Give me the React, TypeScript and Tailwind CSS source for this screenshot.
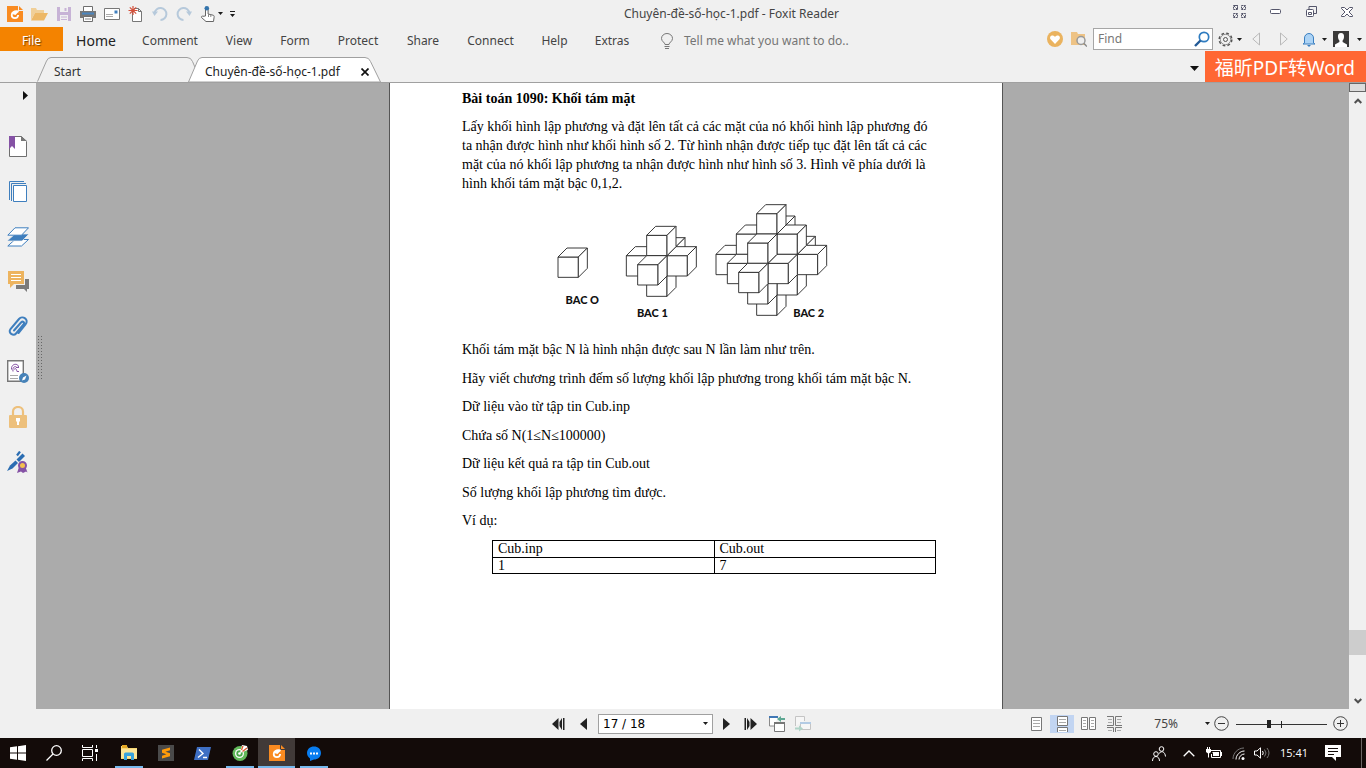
import type { ReactNode } from "react";

type IconProps = { w?: number; h?: number; box?: string; className?: string; children: ReactNode };

function Icon({ w = 16, h = 16, box, className = "", children }: IconProps) {
  return (
    <svg width={w} height={h} viewBox={box ?? `0 0 ${w} ${h}`} fill="none" className={`shrink-0 ${className}`} aria-hidden="true">
      {children}
    </svg>
  );
}

function IconButton({ label, className, children }: { label: string; className: string; children: ReactNode }) {
  return (
    <button type="button" aria-label={label} className={`flex shrink-0 items-center justify-center ${className}`}>
      {children}
    </button>
  );
}

function Caret({ className = "" }: { className?: string }) {
  return (
    <Icon w={5} h={3} className={className}>
      <path d="M0 0h5L2.500 3z" fill="#1c1c1c" />
    </Icon>
  );
}

function FoxitLogo() {
  return (
    <Icon>
      <path d="M0 0h11v5h5v11H0z" fill="#f98b21" />
      <path d="M12 0l4 4h-4z" fill="#f98b21" />
      <path d="M11.500 5.500C7 4.500 4.700 6.500 4.700 9c0 2 1.400 3.200 3.300 3.200 1.900 0 3-1.200 3.200-3.200" stroke="#fff" strokeWidth="1.800" />
      <path d="M5 8c1-3 4-3 7-2.800L8.500 9z" fill="#fff" />
    </Icon>
  );
}

const quickTools: { label: string; width: string; icon: ReactNode }[] = [
  { label: "Foxit Reader", width: "w-[25px]", icon: <FoxitLogo /> },
  {
    label: "Open",
    width: "w-[25px]",
    icon: (
      <Icon w={17} h={14}>
        <path d="M0 13V1h5l1 2h7v3H4z" fill="#f0cf98" />
        <path d="M4 6h13l-4 7.500H0z" fill="#edb867" />
      </Icon>
    ),
  },
  {
    label: "Save",
    width: "w-6",
    icon: (
      <Icon w={14} h={14}>
        <path d="M0 0h14v14H0z" fill="#c7b3d6" />
        <path d="M3 0h8v5H3zM3 8h8v6H3z" fill="#f0f0f0" />
        <path d="M7.500 1h2v3h-2zM4 9.500h6v1H4zM4 12h6v1H4z" fill="#c7b3d6" />
      </Icon>
    ),
  },
  {
    label: "Print",
    width: "w-6",
    icon: (
      <Icon>
        <path d="M3.500 5V.5h9V5" fill="#fff" stroke="#6e6e6e" />
        <path d="M0 5h16v7H0z" fill="#777" />
        <path d="M2 6.500h12v2H2z" fill="#4a86c0" />
        <path d="M3.500 10.500h9v5h-9z" fill="#fff" stroke="#6e6e6e" />
        <path d="M5 13h6" stroke="#888" />
      </Icon>
    ),
  },
  {
    label: "Email",
    width: "w-6",
    icon: (
      <Icon w={16} h={12}>
        <path d="M.5.5h15v11H.5z" fill="#fff" stroke="#777" />
        <path d="M10.500 2.500h3v3h-3z" fill="#3f7fbe" />
        <path d="M2 6.500h7M2 8.500h7" stroke="#aaa" />
      </Icon>
    ),
  },
  {
    label: "New document",
    width: "w-6",
    icon: (
      <Icon>
        <path d="M4.500 5.500V15.500h9v-10l-3-3H6" fill="#fff" stroke="#777" />
        <path d="M10.500 2.500v3h3" stroke="#777" />
        <path d="M5 0v9M.5 4.500h9M1.800 1.300l6.400 6.400M8.200 1.300L1.800 7.700" stroke="#d4503a" strokeWidth="1.200" />
      </Icon>
    ),
  },
  {
    label: "Undo",
    width: "w-6",
    icon: (
      <Icon>
        <path d="M2.500 7a6 6 0 1 1 6 7" stroke="#b6c9db" strokeWidth="2" />
        <path d="M0 5.500h6L2.500 10z" fill="#b6c9db" />
      </Icon>
    ),
  },
  {
    label: "Redo",
    width: "w-6",
    icon: (
      <Icon>
        <path d="M13.500 7a6 6 0 1 0-6 7" stroke="#b6c9db" strokeWidth="2" />
        <path d="M16 5.500h-6l3.500 4.500z" fill="#b6c9db" />
      </Icon>
    ),
  },
  {
    label: "Touch mode",
    width: "w-6",
    icon: (
      <Icon>
        <path d="M5.500 10V3.500a1.300 1.300 0 0 1 2.600 0V8l5 1.200c1 .3 1.200 1 1 2l-.6 4.300H6L1.500 11.500c-.5-1 .6-1.800 1.500-1.200z" fill="#fff" stroke="#666" />
        <path d="M8.500 8v3M10.800 8.500v2.500" stroke="#888" />
        <circle cx="6.800" cy="2.300" r="2.300" fill="#3474ac" />
      </Icon>
    ),
  },
];

function TitleBar() {
  return (
    <header className="flex h-[27px] shrink-0 items-center">
      <div className="flex items-center pl-0.5">
        {quickTools.map((t) => (
          <IconButton key={t.label} label={t.label} className={`h-6 ${t.width}`}>
            {t.icon}
          </IconButton>
        ))}
        <Caret className="-ml-0.5" />
        <IconButton label="Customize toolbar" className="h-6 w-[19px]">
          <Icon w={5} h={6}>
            <path d="M0 0h5v1H0zM0 3h5L2.500 6z" fill="#1c1c1c" />
          </Icon>
        </IconButton>
      </div>
      <h1 className="flex-1 truncate text-center text-xs text-[#444]">Chuyên-đề-số-học-1.pdf - Foxit Reader</h1>
      <div className="flex h-6 items-center pr-px pb-1">
        <IconButton label="Ribbon display" className="w-9">
          <Icon w={13} h={13}>
            <path d="M1 .5h3.500v3.500M4.500.5H.5v4h4zM8.500.5h4v4h-4zM.5 8.500h4v4h-4zM8.500 8.500h4v4h-4zM1 1l3 3M12 1L9 4M1 12l3-3M12 12L9 9" stroke="#55566b" strokeDasharray="2 .6" />
          </Icon>
        </IconButton>
        <IconButton label="Minimize" className="w-9">
          <Icon w={11} h={5}>
            <rect x=".5" y=".5" width="10" height="4" rx="1" fill="#fff" stroke="#55566b" />
          </Icon>
        </IconButton>
        <IconButton label="Restore" className="w-9">
          <Icon w={11} h={11}>
            <path d="M3 3V.5h7.500v7H8" stroke="#55566b" />
            <rect x=".5" y="3.500" width="7" height="7" rx="1" fill="#fff" stroke="#55566b" />
            <path d="M2.500 6.500h3v2h-3z" stroke="#55566b" />
          </Icon>
        </IconButton>
        <IconButton label="Close" className="w-9">
          <Icon w={12} h={10}>
            <path d="M.5.5h3L6 3 8.500.5h3v1L8 5l3.500 3.500v1h-3L6 7 3.500 9.500h-3v-1L4 5 .5 1.500z" fill="#fff" stroke="#55566b" />
          </Icon>
        </IconButton>
      </div>
    </header>
  );
}

const menus = [
  { label: "Home", style: "w-[66px] text-sm text-[#222]" },
  { label: "Comment", style: "w-[82px] text-xs text-[#444]" },
  { label: "View", style: "w-[56px] text-xs text-[#444]" },
  { label: "Form", style: "w-[56px] text-xs text-[#444]" },
  { label: "Protect", style: "w-[70px] text-xs text-[#444]" },
  { label: "Share", style: "w-[60px] text-xs text-[#444]" },
  { label: "Connect", style: "w-[75px] text-xs text-[#444]" },
  { label: "Help", style: "w-[53px] text-xs text-[#444]" },
  { label: "Extras", style: "w-[62px] text-xs text-[#444]" },
];

function MenuBar() {
  return (
    <div className="flex h-6 shrink-0 items-center">
      <nav className="flex h-full items-center" aria-label="Ribbon">
        <button type="button" className="h-full w-[63px] bg-[#f48300] pt-1 text-xs text-white [text-shadow:1px_1px_1px_#7a4200]">
          File
        </button>
        {menus.map((m) => (
          <button key={m.label} type="button" className={`h-full whitespace-nowrap pt-1 text-center ${m.style}`}>
            {m.label}
          </button>
        ))}
      </nav>
      <button type="button" className="ml-[18px] flex items-center gap-[11px] whitespace-nowrap pt-1 text-xs text-[#757575]">
        <Icon w={12} h={16}>
          <path d="M4 11.500C4 9.500.5 8.500.5 5.500a5.500 5 0 0 1 11 0c0 3-3.500 4-3.500 6zM3.500 13.500h5M4 15.500h4" stroke="#777" />
        </Icon>
        Tell me what you want to do..
      </button>
      <div className="ml-auto flex items-center">
        <IconButton label="Favourites" className="mr-2">
          <Icon>
            <circle cx="8" cy="8" r="8" fill="#eab35f" />
            <path d="M8 13L3.800 8.600C2.300 6.800 3.400 4.500 5.300 4.500c1.200 0 2 .5 2.700 1.500.7-1 1.500-1.500 2.700-1.500 1.900 0 3 2.300 1.500 4.100z" fill="#fff" />
          </Icon>
        </IconButton>
        <IconButton label="Search folder" className="mr-1.5">
          <Icon>
            <path d="M0 1h6l1 2h7v11H0z" fill="#eec385" />
            <circle cx="10" cy="9.500" r="4" fill="#eee" stroke="#999" strokeWidth="1.500" />
            <path d="M13 12.500l3 3" stroke="#888" strokeWidth="1.500" />
          </Icon>
        </IconButton>
        <label className="flex h-[22px] w-[120px] items-center border border-[#a6a6a6] bg-white pr-0.5 pl-1">
          <input type="text" placeholder="Find" aria-label="Find" className="w-0 flex-1 bg-transparent text-xs outline-none placeholder:text-[#777]" />
          <Icon>
            <circle cx="10" cy="6" r="4.700" stroke="#2f7cc0" strokeWidth="1.700" />
            <path d="M6.500 9.500L1 15" stroke="#235a96" strokeWidth="2.400" />
          </Icon>
        </label>
        <IconButton label="Settings" className="ml-[5px] gap-1">
          <Icon w={15} h={15}>
            <circle cx="7.500" cy="7.500" r="6.300" stroke="#555" strokeDasharray="2.700 2.250" strokeWidth="1.500" />
            <circle cx="7.500" cy="7.500" r="5.200" stroke="#777" strokeWidth=".8" />
            <circle cx="7.500" cy="7.500" r="2" stroke="#555" />
          </Icon>
          <Caret />
        </IconButton>
        <IconButton label="Previous result" className="ml-2.5">
          <Icon w={8} h={14}>
            <path d="M7.500 1v12L.8 7z" stroke="#b9b9b9" />
          </Icon>
        </IconButton>
        <IconButton label="Next result" className="ml-5">
          <Icon w={8} h={14}>
            <path d="M.5 1v12l6.700-6z" stroke="#b9b9b9" />
          </Icon>
        </IconButton>
        <IconButton label="Notifications" className="ml-3.5 gap-1.5">
          <Icon w={14} h={15}>
            <path d="M2.500 11V6a4.500 4.500 0 0 1 9 0v5l1.500 1H1z" fill="#acd3f5" stroke="#3a7fc0" />
            <path d="M5 13h4l-2 2z" fill="#3a7fc0" />
          </Icon>
          <Caret />
        </IconButton>
        <IconButton label="Account" className="mr-1 ml-1.5 gap-2">
          <Icon>
            <path d="M0 0h16v16H0z" fill="#3b3a39" />
            <path d="M8 2c2.200 0 3.200 1.500 3 4-.1 1.800-.8 3-1.400 3.600V11l4.400 2.500V16H2v-2.500L6.400 11V9.600C5.800 9 5.100 7.800 5 6c-.2-2.500.8-4 3-4z" fill="#fff" />
          </Icon>
          <Caret />
        </IconButton>
      </div>
    </div>
  );
}

function TabBar() {
  return (
    <div className="flex h-8 shrink-0 items-end border-b border-[#a0a0a0]">
      <button type="button" className="relative ml-[37px] flex h-[25px] w-[159px] items-center pt-1 pl-[17px] text-xs text-[#333]">
        <Icon w={159} h={25} className="absolute inset-0">
          <path d="M.5 24.500L9.500 4Q11 .5 14 .5h136q4 0 5.500 4l3 7" stroke="#a0a0a0" />
        </Icon>
        <span className="relative">Start</span>
      </button>
      <button type="button" className="relative -ml-2 flex h-[25px] w-[194px] items-center justify-between pt-1 pr-[13px] pl-[17px] text-xs whitespace-nowrap text-[#222]">
        <Icon w={194} h={25} className="absolute inset-0">
          <path d="M.5 25L9.500 4Q11 .5 14 .5h163q4 0 5.500 4l10 20.500z" fill="#fff" stroke="#a0a0a0" />
        </Icon>
        <span className="relative">Chuyên-đề-số-học-1.pdf</span>
        <Icon w={8} h={8} className="relative">
          <path d="M.5.5l7 7M7.500.5l-7 7" stroke="#111" strokeWidth="1.700" />
        </Icon>
      </button>
      <div className="ml-auto flex h-full items-center">
        <IconButton label="Tab list" className="px-1.5 pt-1">
          <Icon w={9} h={5}>
            <path d="M0 0h9L4.500 5z" fill="#111" />
          </Icon>
        </IconButton>
        <a href="#pdf-to-word" className="flex h-full items-center bg-[#ff6733] pt-0.5 pr-[11px] pl-2.5 font-['Noto_Sans','Noto_Sans_CJK_SC',sans-serif] text-[19px] leading-6 whitespace-nowrap text-white">
          福昕PDF转Word
        </a>
      </div>
    </div>
  );
}

const panels: { label: string; icon: ReactNode }[] = [
  {
    label: "Bookmarks",
    icon: (
      <Icon w={18} h={21}>
        <path d="M.500 .500h12l5 5v15H.5z" fill="#fff" stroke="#6f6f6f" />
        <path d="M12 0l6 5h-6z" fill="#777" />
        <path d="M0 0h6v13l-3-3-3 3z" fill="#8552a5" />
      </Icon>
    ),
  },
  {
    label: "Pages",
    icon: (
      <Icon w={18} h={21}>
        <path d="M.5 19V.5H15M2.500 20V2.500H17" stroke="#3f7fbe" />
        <path d="M4.500 4.500h13v16h-13z" fill="#fff" stroke="#3f7fbe" />
      </Icon>
    ),
  },
  {
    label: "Layers",
    icon: (
      <Icon w={22} h={20}>
        <path d="M8 12.500h13.500l-7 6.500H.8z" fill="#fff" stroke="#3f7fbe" />
        <path d="M8 7h14l-7 7H0z" fill="#3f7fbe" stroke="#f0f0f0" strokeWidth=".7" />
        <path d="M8 .8h13.500l-7 7.400H.8z" fill="#fff" stroke="#3f7fbe" />
      </Icon>
    ),
  },
  {
    label: "Comments",
    icon: (
      <Icon w={21} h={21}>
        <path d="M13 8h8v10h-2v3l-3-3H8v-4h9V8z" fill="#7b7b7b" />
        <path d="M0 0h16v13H6l-4 4v-4H0z" fill="#edb45f" />
        <path d="M3 3.500h10M3 6.500h10M3 9.500h10" stroke="#fff" />
      </Icon>
    ),
  },
  {
    label: "Attachments",
    icon: (
      <Icon w={20} h={22}>
        <path d="M6 14.500L13 6.500c2-2 4 0 2.500 2L8 17.500c-2.500 3-8.500-.5-5.500-4.500L11 3c3.500-4 10.500.5 6.500 5.500l-7 8.500" stroke="#3f7fbe" strokeWidth="2" strokeLinecap="round" />
      </Icon>
    ),
  },
  {
    label: "Signatures",
    icon: (
      <Icon w={22} h={23}>
        <path d="M.7.700h15.600v20.600H.7z" fill="#fff" stroke="#777" strokeWidth="1.400" />
        <path d="M4.500 9.500c-.5-6.500 7-6.500 7-2.500M6 11.500c-1-6 4-5.500 4-3.500M7.500 9.500c0-2 2-1 2.500 2h2M9 7.500h3" stroke="#8552a5" />
        <path d="M3 15.500h8M3 18.500h8" stroke="#aaa" />
        <circle cx="17" cy="18" r="5" fill="#4682b8" />
        <path d="M19.500 15.500l-1.500 4-3 1 1-3z" fill="#fff" />
      </Icon>
    ),
  },
  {
    label: "Security",
    icon: (
      <Icon w={18} h={22}>
        <path d="M4 10V5.500c0-6 10-6 10 0V10" stroke="#edc07c" strokeWidth="2.200" />
        <rect y="9" width="18" height="13" rx="1" fill="#edc07c" />
        <path d="M7 12h4v3l-1 1v3H8v-3l-1-1z" fill="#fff" />
      </Icon>
    ),
  },
  {
    label: "Digital signatures",
    icon: (
      <Icon w={22} h={22}>
        <path d="M13 .5l-3 4" stroke="#2b6db2" strokeWidth="2.200" />
        <path d="M15.500 2.500L18 5l-6 6-2.500-2.500z" fill="#2b6db2" />
        <path d="M8.500 9.500l2.500 2.500L5.500 17.500 0 20l3-5.500z" fill="#2b6db2" />
        <path d="M12 16l-2 6 4-1.500 2 1.500 3-1.500 1.500 1L18.500 16z" fill="#8552a5" />
        <circle cx="15.500" cy="14.500" r="3.500" fill="#f4c04e" stroke="#8552a5" strokeWidth="2" />
      </Icon>
    ),
  },
];

function SidePanel() {
  return (
    <aside className="flex w-9 shrink-0 flex-col bg-[#f0f0f0]">
      <IconButton label="Expand panel" className="h-[41px] pb-4 pl-3.5">
        <Icon w={5} h={9}>
          <path d="M0 0l5 4.500L0 9z" fill="#111" />
        </Icon>
      </IconButton>
      {panels.map((p) => (
        <IconButton key={p.label} label={p.label} className="h-[45px]">
          {p.icon}
        </IconButton>
      ))}
    </aside>
  );
}

const CUBE = 61;
const DEPTH = 27;

function Cube({ x, y }: { x: number; y: number }) {
  return (
    <g fill="#fff" stroke="#2c2c2c" strokeWidth="2.800" strokeLinejoin="round">
      <path d={`M${x} ${y}h${CUBE}v${CUBE}h${-CUBE}z`} />
      <path d={`M${x} ${y}l${DEPTH} ${-DEPTH}h${CUBE}l${-DEPTH} ${DEPTH}z`} />
      <path d={`M${x + CUBE} ${y}l${DEPTH} ${-DEPTH}v${CUBE}l${-DEPTH} ${DEPTH}z`} />
    </g>
  );
}

// Cubes are painted back to front, bottom to top and left to right.
function Octahedron({ order, cx, cy }: { order: number; cx: number; cy: number }) {
  const cubes: ReactNode[] = [];
  for (let z = -order; z <= order; z++)
    for (let y = -order; y <= order; y++)
      for (let x = -order; x <= order; x++) {
        const hidden = x < 0 && y < 0;
        if (!hidden && Math.abs(x) + Math.abs(y) + Math.abs(z) <= order)
          cubes.push(<Cube key={`${x},${y},${z}`} x={cx + x * CUBE - z * DEPTH} y={cy - y * CUBE + z * DEPTH} />);
      }
  return <>{cubes}</>;
}

function Figure() {
  return (
    <svg viewBox="0 0 900 390" className="ml-[78px] block h-[130px] w-[300px]" role="img" aria-label="BAC 0, BAC 1, BAC 2">
      <Octahedron order={0} cx={54} cy={186} />
      <Octahedron order={1} cx={320} cy={182} />
      <Octahedron order={2} cx={650} cy={178} />
      <g fill="#111" fontFamily="Lato, sans-serif" fontWeight="900" fontSize="33" textAnchor="middle">
        <text x="127" y="326">BAC O</text>
        <text x="337" y="365">BAC 1</text>
        <text x="806" y="367">BAC 2</text>
      </g>
    </svg>
  );
}

const paragraphs = [
  "Khối tám mặt bậc N là hình nhận được sau N lần làm như trên.",
  "Hãy viết chương trình đếm số lượng khối lập phương trong khối tám mặt bậc N.",
  "Dữ liệu vào từ tập tin Cub.inp",
  "Chứa số N(1≤N≤100000)",
  "Dữ liệu kết quả ra tập tin Cub.out",
  "Số lượng khối lập phương tìm được.",
  "Ví dụ:",
];

function DocumentPage() {
  return (
    <article className="w-[614px] shrink-0 border-x border-[#555] bg-white px-[72px] pt-1.5 font-['Liberation_Serif','Times_New_Roman',serif] text-sm leading-[19px] text-black">
      <h2 className="font-bold">Bài toán 1090: Khối tám mặt</h2>
      <p className="mt-[9px] whitespace-nowrap">
        Lấy khối hình lập phương và đặt lên tất cả các mặt của nó khối hình lập phương đó
        <br />
        ta nhận được hình như khối hình số 2. Từ hình nhận được tiếp tục đặt lên tất cả các
        <br />
        mặt của nó khối lập phương ta nhận được hình như hình số 3. Hình vẽ phía dưới là
        <br />
        hình khối tám mặt bậc 0,1,2.
      </p>
      <div className="mt-0.5 mb-[15px]">
        <Figure />
      </div>
      <div className="flex h-[190px] flex-col justify-between whitespace-nowrap">
        {paragraphs.map((p) => (
          <p key={p}>{p}</p>
        ))}
      </div>
      <table className="mt-2.5 ml-[30px] w-[444px] table-fixed border-collapse text-left leading-[15px]">
        <thead>
          <tr className="leading-4">
            <th className="border border-black px-[5px] font-normal">Cub.inp</th>
            <th className="border border-black px-[5px] font-normal">Cub.out</th>
          </tr>
        </thead>
        <tbody>
          <tr>
            <td className="border border-black px-[5px]">1</td>
            <td className="border border-black px-[5px]">7</td>
          </tr>
        </tbody>
      </table>
    </article>
  );
}

function ScrollBar() {
  return (
    <div className="flex w-[17px] shrink-0 flex-col items-stretch bg-[#f0f0f0]">
      <div className="h-[9px] border border-[#666] bg-[#dcdcdc]" />
      <IconButton label="Scroll up" className="h-[17px]">
        <Icon w={8} h={6}>
          <path d="M.7 5L4 1.700 7.300 5" stroke="#505050" strokeWidth="2" />
        </Icon>
      </IconButton>
      <div className="flex-1" />
      <div className="h-[25px] bg-[#cdcdcd]" />
      <div className="h-[37px]" />
      <IconButton label="Scroll down" className="h-[17px]">
        <Icon w={8} h={6}>
          <path d="M.7 1L4 4.300 7.300 1" stroke="#505050" strokeWidth="2" />
        </Icon>
      </IconButton>
    </div>
  );
}

function StatusBar() {
  return (
    <div className="grid h-[29px] shrink-0 grid-cols-[1fr_auto_1fr] items-center">
      <div />
      <div className="flex items-center pr-0.5">
        <IconButton label="First page" className="w-[13px]">
          <Icon w={13} h={12}>
            <path d="M6.500 0v12L0 6zM10 0v12L7.500 8V4zM11 0h1.500v12H11z" fill="#222" />
          </Icon>
        </IconButton>
        <IconButton label="Previous page" className="ml-3.5 w-2">
          <Icon w={7} h={12}>
            <path d="M7 0v12L0 6z" fill="#222" />
          </Icon>
        </IconButton>
        <label className="ml-[11px] flex h-5 w-[115px] items-center border border-[#a0a0a0] bg-white pr-1 pl-1">
          <input type="text" defaultValue="17 / 18" aria-label="Page" className="w-0 flex-1 bg-transparent font-['DejaVu_Sans',sans-serif] text-xs text-black outline-none" />
          <Caret />
        </label>
        <IconButton label="Next page" className="ml-[9px] w-2">
          <Icon w={7} h={12}>
            <path d="M0 0v12l7-6z" fill="#222" />
          </Icon>
        </IconButton>
        <IconButton label="Last page" className="ml-3.5 w-[13px]">
          <Icon w={13} h={12}>
            <path d="M.500 0H2v12H.5zM3 0l2.500 4v4L3 12zM6.500 0v12l6.500-6z" fill="#222" />
          </Icon>
        </IconButton>
        <IconButton label="Previous view" className="ml-3">
          <Icon w={17} h={16}>
            <path d="M5 10H.5V1H9" fill="#fff" stroke="#8a8a8a" />
            <path d="M0 0h9v2H0z" fill="#4178b5" />
            <path d="M5.500 6.500h10v9h-10z" fill="#fff" stroke="#777" />
            <path d="M5 6h11v2H5z" fill="#777" />
            <path d="M16 3h-5" stroke="#5fa893" strokeWidth="2" />
            <path d="M8 3l4-3v6z" fill="#5fa893" />
          </Icon>
        </IconButton>
        <IconButton label="Next view" className="ml-[9px]">
          <Icon w={17} h={16}>
            <path d="M.5 10V.5h9V5" fill="#f6f6f6" stroke="#c4c4c4" />
            <path d="M5.500 6.500h10v7h-10z" fill="#f6f6f6" stroke="#c4c4c4" />
            <path d="M5 6h11v2H5z" fill="#b3cbe4" />
            <path d="M0 12.500h5" stroke="#b0d4c8" strokeWidth="2" />
            <path d="M8 12.500l-4-3v6z" fill="#b0d4c8" />
          </Icon>
        </IconButton>
      </div>
      <div className="flex items-center justify-end pr-[18px]">
        <IconButton label="Single page" className="h-[18px] w-6">
          <Icon w={11} h={14}>
            <path d="M.5.500h10v13H.5z" fill="#fff" stroke="#777" />
            <path d="M2 3.500h7M2 6.500h7M2 9.500h7" stroke="#aaa" />
          </Icon>
        </IconButton>
        <IconButton label="Continuous" className="ml-0.5 h-[18px] w-6 bg-[#c2d5f2]">
          <Icon w={11} h={16}>
            <path d="M.5.500h10v9H.5zM.5 16v-4.500h10V16" fill="#fff" stroke="#777" />
            <path d="M2 3.500h7M2 6.500h7M2 14.500h7" stroke="#aaa" />
          </Icon>
        </IconButton>
        <IconButton label="Facing" className="ml-0.5 h-[18px] w-6">
          <Icon w={15} h={13}>
            <path d="M.5.500h6v12h-6zM8.500.500h6v12h-6z" fill="#fff" stroke="#777" />
            <path d="M2 3.500h3M2 6.500h3M2 9.500h3M10 3.500h3M10 6.500h3M10 9.500h3" stroke="#aaa" />
          </Icon>
        </IconButton>
        <IconButton label="Continuous facing" className="ml-0.5 h-[18px] w-6">
          <Icon w={15} h={16}>
            <path d="M0 .5h6.500v9H0M15 .5H8.500v9H15M0 11.500h6.500V16M15 11.500H8.500V16" stroke="#777" />
            <path d="M1 3.500h4M1 6.500h4M1 14.500h4M10 3.500h4M10 6.500h4M10 14.500h4" stroke="#aaa" />
          </Icon>
        </IconButton>
        <button type="button" className="ml-7 flex items-center gap-[27px] text-xs text-[#444]">
          75%
          <Caret />
        </button>
        <IconButton label="Zoom out" className="ml-1">
          <Icon w={15} h={15}>
            <circle cx="7.500" cy="7.500" r="6.800" stroke="#444" />
            <path d="M4 7.500h7" stroke="#333" />
          </Icon>
        </IconButton>
        <div className="relative mr-1.5 ml-[7px] h-4 w-[91px]">
          <input type="range" aria-label="Zoom" defaultValue={36} className="absolute inset-0 m-0 h-4 w-full opacity-0" />
          <Icon w={91} h={16} className="pointer-events-none">
            <path d="M0 8h91v1H0z" fill="#333" />
            <path d="M31 4h4v8h-4zM45 5h1v7h-1z" fill="#222" />
          </Icon>
        </div>
        <IconButton label="Zoom in" className="w-[15px]">
          <Icon w={15} h={15}>
            <circle cx="7.500" cy="7.500" r="6.800" stroke="#444" />
            <path d="M4 7.500h7M7.500 4v7" stroke="#333" />
          </Icon>
        </IconButton>
      </div>
    </div>
  );
}

type TaskApp = { label: string; active?: boolean; running?: boolean; icon: ReactNode };

const apps: TaskApp[] = [
  {
    label: "File Explorer",
    running: true,
    icon: (
      <Icon>
        <path d="M0 1h6l1 2h9v11H0z" fill="#f7d774" />
        <path d="M1 0h5v3H1z" fill="#e4a824" />
        <path d="M0 4h16v9H0z" fill="#fce597" />
        <path d="M3 15V9q0-1.500 1.500-1.500h7Q13 7.500 13 9v6h-3v-4H6v4z" fill="#38a3dd" />
      </Icon>
    ),
  },
  {
    label: "Sublime Text",
    icon: (
      <Icon>
        <path d="M0 0h16v16H0z" fill="#4a4a4a" />
        <path d="M12 2.500v2.800L7.500 6.700 12 8.300v3L4 13.500v-2.700l4.500-1.500L4 7.700v-3z" fill="#ff9b0a" />
      </Icon>
    ),
  },
  {
    label: "PowerShell",
    icon: (
      <Icon w={17} h={13}>
        <path d="M3 0h14l-3 13H0z" fill="#3e6fc4" />
        <path d="M5 2.500l4 4-5 4M9 10.500h4" stroke="#fff" strokeWidth="1.400" />
      </Icon>
    ),
  },
  {
    label: "Coc Coc",
    running: true,
    icon: (
      <Icon>
        <circle cx="8" cy="8.500" r="7.500" fill="#62b95a" />
        <circle cx="7.500" cy="8.500" r="4.500" fill="#fff" />
        <circle cx="7.500" cy="8.500" r="3.200" fill="#4caa4c" />
        <circle cx="7.500" cy="8.500" r="1.300" fill="#fff" />
        <path d="M8 8l2-8 5 1 1 4z" fill="#fff" />
        <path d="M9.500 5l1.500-4M10.500 6.500L15 3" stroke="#dc5a31" strokeWidth="1.300" />
      </Icon>
    ),
  },
  { label: "Foxit Reader", running: true, active: true, icon: <FoxitLogo /> },
  {
    label: "Messenger",
    running: true,
    icon: (
      <Icon w={14} h={15}>
        <path d="M7 .5c4 0 7 2.700 7 6.500s-3 6.500-7 6.500L3 15v-2.500C1 11 0 9.300 0 7 0 3.200 3 .5 7 .5z" fill="#087df0" />
        <path d="M3 6.500h2v2H3zM6 6.500h2v2H6zM9 6.500h2v2H9z" fill="#fff" />
      </Icon>
    ),
  },
];

function TaskBar() {
  return (
    <footer className="flex h-[30px] shrink-0 items-stretch bg-[#130b09] text-white">
      <IconButton label="Start" className="w-9">
        <Icon>
          <path d="M0 2.300L7 1.300V7.500H0zM8 1.200L16 0v7.500H8zM0 8.500h7v6.200l-7-1zM8 8.500h8V16l-8-1.200z" fill="#fff" />
        </Icon>
      </IconButton>
      <IconButton label="Search" className="w-9">
        <Icon>
          <circle cx="10.500" cy="5.500" r="4.800" stroke="#fff" strokeWidth="1.300" />
          <path d="M7 9l-6.500 6.500" stroke="#fff" strokeWidth="1.300" />
        </Icon>
      </IconButton>
      <IconButton label="Task view" className="mr-0.5 w-9">
        <Icon>
          <path d="M.5 0v2.500h10V0M.5 16v-2.500h10V16M.5 4.500h10v7H.5zM14.500 0v3M14.500 9v7" stroke="#fff" />
          <path d="M13 4h3v3h-3z" fill="#fff" />
        </Icon>
      </IconButton>
      {apps.map((a) => (
        <button
          key={a.label}
          type="button"
          aria-label={a.label}
          className={`flex w-[37px] flex-col items-center ${a.active ? "bg-[#413a38]" : ""}`}
        >
          <span className="flex flex-1 items-center pt-0.5">{a.icon}</span>
          <span className={`h-0.5 ${a.active ? "w-full" : "w-7"} ${a.running ? "bg-[#76b9ed]" : ""}`} />
        </button>
      ))}
      <div className="ml-auto flex items-center pr-1">
        <IconButton label="People" className="w-8">
          <Icon w={14} h={15}>
            <circle cx="9.500" cy="3" r="2.300" stroke="#fff" />
            <circle cx="4" cy="8" r="2.300" stroke="#fff" />
            <path d="M.5 15c0-6 7-6 7 0M7 7.500c3-3.500 6-1.500 6.500 3" stroke="#fff" />
          </Icon>
        </IconButton>
        <IconButton label="Hidden icons" className="w-7">
          <Icon w={12} h={7}>
            <path d="M.7 6.300L6 1l5.300 5.300" stroke="#fff" strokeWidth="1.300" />
          </Icon>
        </IconButton>
        <IconButton label="Battery" className="w-[22px]">
          <Icon w={16} h={12}>
            <path d="M4.500 3.500h10v7h-9V7" stroke="#fff" />
            <path d="M6 5h7v4H7V6zM15 5h1v4h-1zM0 2h5v3L3 6.500v4H2v-4L0 5zM1 0h1v2H1zM3 0h1v2H3z" fill="#fff" />
          </Icon>
        </IconButton>
        <IconButton label="Network" className="w-[26px]">
          <Icon w={13} h={13}>
            <path d="M1 12C1 6 6 1 12 1" stroke="#777" />
            <path d="M4 12.500c0-4.500 4-8.500 8.500-8.500M7 12.500C7 9.500 9.500 7 12.500 7" stroke="#fff" />
            <circle cx="11" cy="11.500" r="1.500" fill="#fff" />
          </Icon>
        </IconButton>
        <IconButton label="Volume" className="w-[22px]">
          <Icon w={17} h={12}>
            <path d="M.5 4h2.500L6.500.8v10.400L3 8H.5z" stroke="#fff" />
            <path d="M8.500 4q1.500 2 0 4" stroke="#fff" />
            <path d="M10.500 2.500q3 3.500 0 7M13 1q4 5 0 10" stroke="#777" />
          </Icon>
        </IconButton>
        <time className="w-[42px] text-center font-['Open_Sans',sans-serif] text-[11px]">15:41</time>
        <IconButton label="Action center" className="w-9">
          <Icon>
            <path d="M0 0h16v12h-5v4l-4-4H0z" fill="#fff" />
            <path d="M3 3.500h10M3 6.500h10M3 9.500h6" stroke="#130b09" />
          </Icon>
        </IconButton>
        <div className="ml-2.5 h-[30px] w-px bg-[#6b6564]" />
      </div>
    </footer>
  );
}

export default function App() {
  return (
    <div className="flex h-screen flex-col overflow-hidden bg-[#f0f0f0] font-['Noto_Sans',sans-serif]">
      <TitleBar />
      <MenuBar />
      <TabBar />
      <main className="flex min-h-0 flex-1 bg-[#ababab]">
        <SidePanel />
        <div className="flex w-[7px] shrink-0 items-center justify-center pb-[77px]">
          <Icon w={4} h={44}>
            <path d="M.5 0v44M3.500 0v44" stroke="#666" strokeDasharray="1 2" />
          </Icon>
        </div>
        <div className="flex flex-1 justify-center overflow-hidden">
          <DocumentPage />
        </div>
        <ScrollBar />
      </main>
      <StatusBar />
      <TaskBar />
    </div>
  );
}
